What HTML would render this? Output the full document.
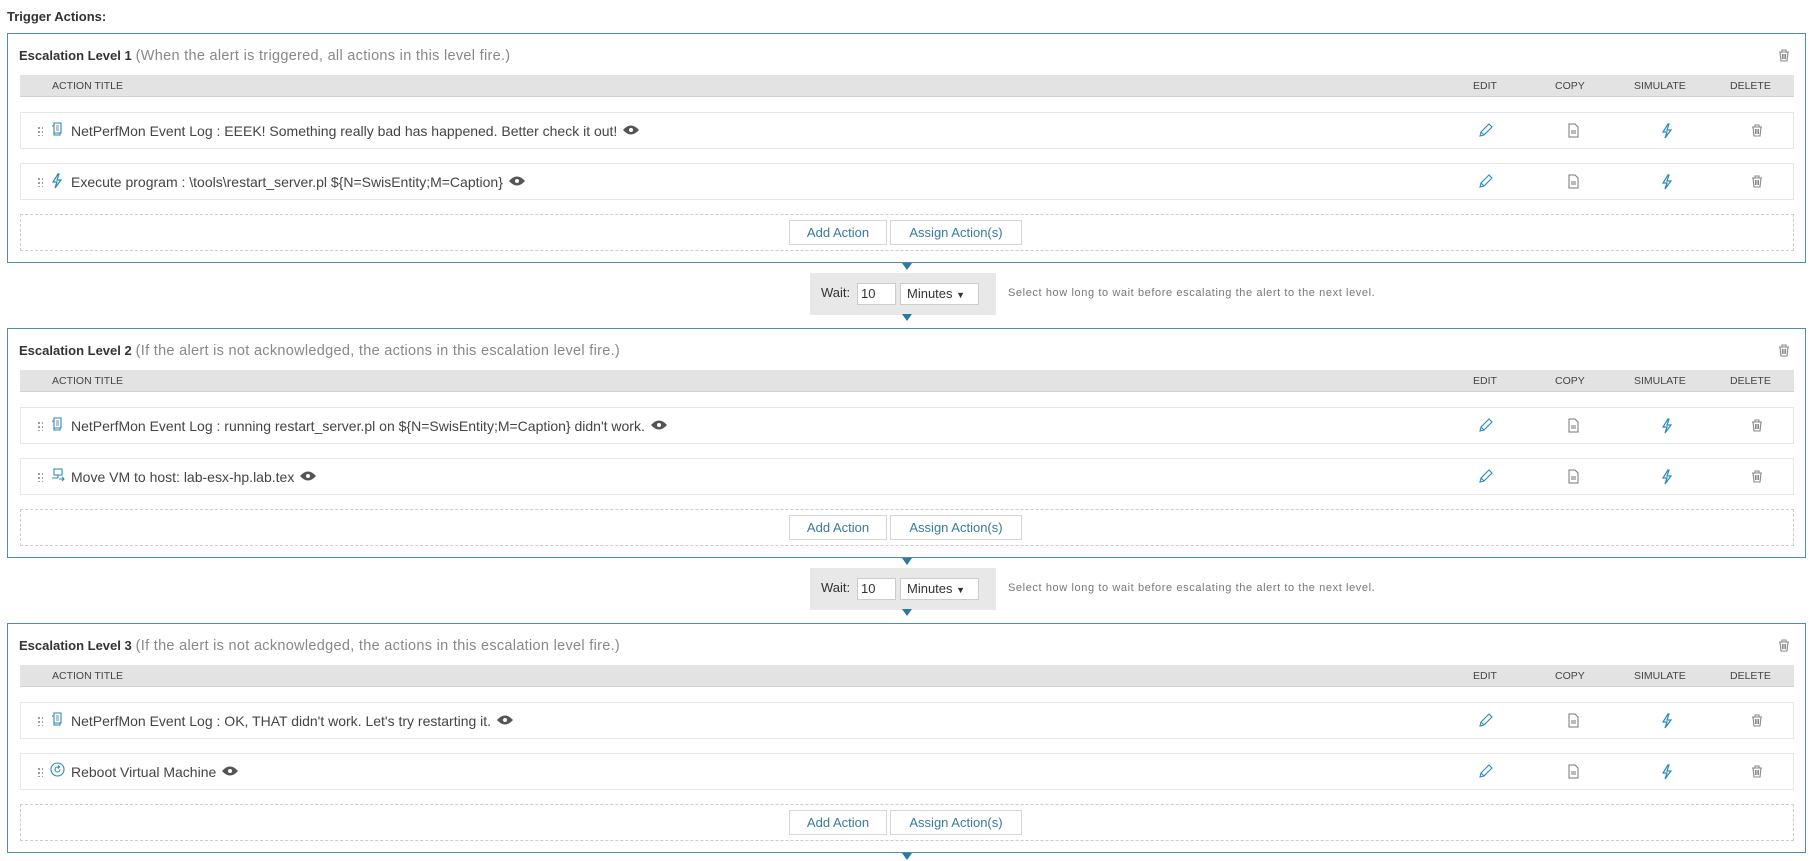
<!DOCTYPE html>
<html><head><meta charset="utf-8"><style>
*{box-sizing:border-box;margin:0;padding:0}
body{width:1811px;height:861px;overflow:hidden;background:#fff;font-family:"Liberation Sans",sans-serif;color:#333;position:relative}
.ta{position:absolute;left:7px;top:9px;font-size:13px;font-weight:bold;color:#333}
.lvl{position:absolute;left:7px;width:1799px;height:230px;border:1px solid #4a90b0;background:#fff}
.tt{position:absolute;left:11px;top:13px;font-size:14px;color:#333;white-space:nowrap}
.tt b{font-size:13px}
.tt span{font-weight:normal;color:#888;font-size:14.5px;letter-spacing:0.3px}
.hdr{position:absolute;left:12px;top:41px;width:1774px;height:22px;background:#e3e3e3;border-bottom:1px solid #d0d0d0;font-size:10.5px;color:#444}
.hdr div{position:absolute;top:5px}
.row{position:absolute;left:12px;width:1774px;height:37px;border:1px solid #e6e6e6;background:#fff;font-size:14px;color:#444}
.row .txt{position:absolute;left:50px;top:10px;white-space:nowrap}
.dots{position:absolute;left:16px;top:13px;width:6px;height:10px;background-image:radial-gradient(circle,#999 1px,transparent 1.3px);background-size:4px 4px}
.ic{position:absolute;top:9px}
.eye{display:inline-block;vertical-align:1px;margin-left:2px}
.dash{position:absolute;left:12px;top:180px;width:1774px;height:37px;border:1.5px dashed #ccc}
.btn{position:absolute;top:5px;height:25px;border:1px solid #d6d6d6;font-size:13px;color:#3a7a9a;line-height:23px;text-align:center;background:#fff}
.wait{position:absolute;left:810px;width:186px;height:42px;background:#e8e8e8;font-size:13px;color:#333}
.tri{position:absolute;width:0;height:0;border-left:5px solid transparent;border-right:5px solid transparent;border-top:7px solid #2a7aa0}
.help{position:absolute;left:1008px;font-size:11px;color:#777;letter-spacing:0.6px}
</style></head><body>
<div class="ta">Trigger Actions:</div>

<div class="lvl" style="top:33px">
 <div class="tt"><b>Escalation Level 1</b> <span>(When the alert is triggered, all actions in this level fire.)</span></div>
 <svg style="position:absolute;left:1769px;top:14px" width="14" height="14" viewBox="0 0 14 14"><path d="M2 4h10M5 4V2h4v2M3 4l1 9h6l1-9M5.5 6v5M7 6v5M8.5 6v5" fill="none" stroke="#888" stroke-width="1.1"/></svg>
 <div class="hdr"><div style="left:32px">ACTION TITLE</div><div style="left:1453px">EDIT</div><div style="left:1535px">COPY</div><div style="left:1614px">SIMULATE</div><div style="left:1710px">DELETE</div></div>
 <div class="row" style="top:78px"><div class="dots"></div><svg class="ic" style="left:30px" width="12" height="14" viewBox="0 0 12 14"><path d="M3 1h7v10H3zM1 4h2v9h6v-2" fill="none" stroke="#2a8ab8" stroke-width="1.1"/><path d="M5 4h3M5 6h3M5 8h3" stroke="#888"/></svg><div class="txt">NetPerfMon Event Log : EEEK! Something really bad has happened. Better check it out! <svg class="eye" width="16" height="10" viewBox="0 0 16 10"><path d="M0 5Q8-4 16 5Q8 14 0 5z" fill="#555"/><circle cx="8" cy="5" r="2" fill="#fff"/></svg></div>
  <svg style="position:absolute;left:1456px;top:10px" width="16" height="16" viewBox="0 0 16 16"><path d="M3 13l1-4 8-8 3 3-8 8zM4 9l3 3" fill="none" stroke="#2a8ab8" stroke-width="1.1"/></svg>
  <svg style="position:absolute;left:1547px;top:10px" width="12" height="16" viewBox="0 0 12 16"><path d="M1 1h6l3 3v10H1z" fill="none" stroke="#777"/><path d="M3 8h5M3 10h5" stroke="#777"/></svg>
  <svg style="position:absolute;left:1640px;top:10px" width="12" height="16" viewBox="0 0 12 16"><path d="M7 1L2 9h4l-2 6 6-8H6l2-6z" fill="none" stroke="#2a8ab8" stroke-width="1.2"/></svg>
  <svg style="position:absolute;left:1729px;top:10px" width="14" height="14" viewBox="0 0 14 14"><path d="M2 4h10M5 4V2h4v2M3 4l1 9h6l1-9M5.5 6v5M7 6v5M8.5 6v5" fill="none" stroke="#888" stroke-width="1.1"/></svg></div>
 <div class="row" style="top:129px"><div class="dots"></div><svg class="ic" style="left:30px" width="12" height="16" viewBox="0 0 12 16"><path d="M7 1L2 9h4l-2 6 6-8H6l2-6z" fill="none" stroke="#2a8ab8" stroke-width="1.2"/></svg><div class="txt">Execute program : \tools\restart_server.pl ${N=SwisEntity;M=Caption} <svg class="eye" width="16" height="10" viewBox="0 0 16 10"><path d="M0 5Q8-4 16 5Q8 14 0 5z" fill="#555"/><circle cx="8" cy="5" r="2" fill="#fff"/></svg></div>
  <svg style="position:absolute;left:1456px;top:10px" width="16" height="16" viewBox="0 0 16 16"><path d="M3 13l1-4 8-8 3 3-8 8zM4 9l3 3" fill="none" stroke="#2a8ab8" stroke-width="1.1"/></svg>
  <svg style="position:absolute;left:1547px;top:10px" width="12" height="16" viewBox="0 0 12 16"><path d="M1 1h6l3 3v10H1z" fill="none" stroke="#777"/><path d="M3 8h5M3 10h5" stroke="#777"/></svg>
  <svg style="position:absolute;left:1640px;top:10px" width="12" height="16" viewBox="0 0 12 16"><path d="M7 1L2 9h4l-2 6 6-8H6l2-6z" fill="none" stroke="#2a8ab8" stroke-width="1.2"/></svg>
  <svg style="position:absolute;left:1729px;top:10px" width="14" height="14" viewBox="0 0 14 14"><path d="M2 4h10M5 4V2h4v2M3 4l1 9h6l1-9M5.5 6v5M7 6v5M8.5 6v5" fill="none" stroke="#888" stroke-width="1.1"/></svg></div>
 <div class="dash"><div class="btn" style="left:768px;width:98px">Add Action</div><div class="btn" style="left:869px;width:132px">Assign Action(s)</div></div>
</div>
<div class="tri" style="left:902px;top:263px"></div>
<div class="wait" style="top:273px"><span style="position:absolute;left:11px;top:12px">Wait:</span><div style="position:absolute;left:47px;top:10px;width:39px;height:22px;background:#fff;border:1px solid #ccc;padding:2px 3px">10</div><div style="position:absolute;left:90px;top:10px;width:79px;height:22px;background:#fff;border:1px solid #ccc;padding:2px 6px">Minutes <span style="font-size:9px">▼</span></div></div>
<div class="help" style="top:287px">Select how long to wait before escalating the alert to the next level.</div>
<div class="tri" style="left:902px;top:314px"></div>

<div class="lvl" style="top:328px">
 <div class="tt"><b>Escalation Level 2</b> <span>(If the alert is not acknowledged, the actions in this escalation level fire.)</span></div>
 <svg style="position:absolute;left:1769px;top:14px" width="14" height="14" viewBox="0 0 14 14"><path d="M2 4h10M5 4V2h4v2M3 4l1 9h6l1-9M5.5 6v5M7 6v5M8.5 6v5" fill="none" stroke="#888" stroke-width="1.1"/></svg>
 <div class="hdr"><div style="left:32px">ACTION TITLE</div><div style="left:1453px">EDIT</div><div style="left:1535px">COPY</div><div style="left:1614px">SIMULATE</div><div style="left:1710px">DELETE</div></div>
 <div class="row" style="top:78px"><div class="dots"></div><svg class="ic" style="left:30px" width="12" height="14" viewBox="0 0 12 14"><path d="M3 1h7v10H3zM1 4h2v9h6v-2" fill="none" stroke="#2a8ab8" stroke-width="1.1"/><path d="M5 4h3M5 6h3M5 8h3" stroke="#888"/></svg><div class="txt">NetPerfMon Event Log : running restart_server.pl on ${N=SwisEntity;M=Caption} didn't work. <svg class="eye" width="16" height="10" viewBox="0 0 16 10"><path d="M0 5Q8-4 16 5Q8 14 0 5z" fill="#555"/><circle cx="8" cy="5" r="2" fill="#fff"/></svg></div>
  <svg style="position:absolute;left:1456px;top:10px" width="16" height="16" viewBox="0 0 16 16"><path d="M3 13l1-4 8-8 3 3-8 8zM4 9l3 3" fill="none" stroke="#2a8ab8" stroke-width="1.1"/></svg>
  <svg style="position:absolute;left:1547px;top:10px" width="12" height="16" viewBox="0 0 12 16"><path d="M1 1h6l3 3v10H1z" fill="none" stroke="#777"/><path d="M3 8h5M3 10h5" stroke="#777"/></svg>
  <svg style="position:absolute;left:1640px;top:10px" width="12" height="16" viewBox="0 0 12 16"><path d="M7 1L2 9h4l-2 6 6-8H6l2-6z" fill="none" stroke="#2a8ab8" stroke-width="1.2"/></svg>
  <svg style="position:absolute;left:1729px;top:10px" width="14" height="14" viewBox="0 0 14 14"><path d="M2 4h10M5 4V2h4v2M3 4l1 9h6l1-9M5.5 6v5M7 6v5M8.5 6v5" fill="none" stroke="#888" stroke-width="1.1"/></svg></div>
 <div class="row" style="top:129px"><div class="dots"></div><svg class="ic" style="left:29px" width="16" height="14" viewBox="0 0 16 14"><path d="M4 1h8v6H4zM8 7v3M2 10h6M9 11h5M12 9l2 2-2 2" fill="none" stroke="#2a8ab8" stroke-width="1.1"/></svg><div class="txt">Move VM to host: lab-esx-hp.lab.tex <svg class="eye" width="16" height="10" viewBox="0 0 16 10"><path d="M0 5Q8-4 16 5Q8 14 0 5z" fill="#555"/><circle cx="8" cy="5" r="2" fill="#fff"/></svg></div>
  <svg style="position:absolute;left:1456px;top:10px" width="16" height="16" viewBox="0 0 16 16"><path d="M3 13l1-4 8-8 3 3-8 8zM4 9l3 3" fill="none" stroke="#2a8ab8" stroke-width="1.1"/></svg>
  <svg style="position:absolute;left:1547px;top:10px" width="12" height="16" viewBox="0 0 12 16"><path d="M1 1h6l3 3v10H1z" fill="none" stroke="#777"/><path d="M3 8h5M3 10h5" stroke="#777"/></svg>
  <svg style="position:absolute;left:1640px;top:10px" width="12" height="16" viewBox="0 0 12 16"><path d="M7 1L2 9h4l-2 6 6-8H6l2-6z" fill="none" stroke="#2a8ab8" stroke-width="1.2"/></svg>
  <svg style="position:absolute;left:1729px;top:10px" width="14" height="14" viewBox="0 0 14 14"><path d="M2 4h10M5 4V2h4v2M3 4l1 9h6l1-9M5.5 6v5M7 6v5M8.5 6v5" fill="none" stroke="#888" stroke-width="1.1"/></svg></div>
 <div class="dash"><div class="btn" style="left:768px;width:98px">Add Action</div><div class="btn" style="left:869px;width:132px">Assign Action(s)</div></div>
</div>
<div class="tri" style="left:902px;top:558px"></div>
<div class="wait" style="top:568px"><span style="position:absolute;left:11px;top:12px">Wait:</span><div style="position:absolute;left:47px;top:10px;width:39px;height:22px;background:#fff;border:1px solid #ccc;padding:2px 3px">10</div><div style="position:absolute;left:90px;top:10px;width:79px;height:22px;background:#fff;border:1px solid #ccc;padding:2px 6px">Minutes <span style="font-size:9px">▼</span></div></div>
<div class="help" style="top:582px">Select how long to wait before escalating the alert to the next level.</div>
<div class="tri" style="left:902px;top:609px"></div>

<div class="lvl" style="top:623px">
 <div class="tt"><b>Escalation Level 3</b> <span>(If the alert is not acknowledged, the actions in this escalation level fire.)</span></div>
 <svg style="position:absolute;left:1769px;top:14px" width="14" height="14" viewBox="0 0 14 14"><path d="M2 4h10M5 4V2h4v2M3 4l1 9h6l1-9M5.5 6v5M7 6v5M8.5 6v5" fill="none" stroke="#888" stroke-width="1.1"/></svg>
 <div class="hdr"><div style="left:32px">ACTION TITLE</div><div style="left:1453px">EDIT</div><div style="left:1535px">COPY</div><div style="left:1614px">SIMULATE</div><div style="left:1710px">DELETE</div></div>
 <div class="row" style="top:78px"><div class="dots"></div><svg class="ic" style="left:30px" width="12" height="14" viewBox="0 0 12 14"><path d="M3 1h7v10H3zM1 4h2v9h6v-2" fill="none" stroke="#2a8ab8" stroke-width="1.1"/><path d="M5 4h3M5 6h3M5 8h3" stroke="#888"/></svg><div class="txt">NetPerfMon Event Log : OK, THAT didn't work. Let's try restarting it. <svg class="eye" width="16" height="10" viewBox="0 0 16 10"><path d="M0 5Q8-4 16 5Q8 14 0 5z" fill="#555"/><circle cx="8" cy="5" r="2" fill="#fff"/></svg></div>
  <svg style="position:absolute;left:1456px;top:10px" width="16" height="16" viewBox="0 0 16 16"><path d="M3 13l1-4 8-8 3 3-8 8zM4 9l3 3" fill="none" stroke="#2a8ab8" stroke-width="1.1"/></svg>
  <svg style="position:absolute;left:1547px;top:10px" width="12" height="16" viewBox="0 0 12 16"><path d="M1 1h6l3 3v10H1z" fill="none" stroke="#777"/><path d="M3 8h5M3 10h5" stroke="#777"/></svg>
  <svg style="position:absolute;left:1640px;top:10px" width="12" height="16" viewBox="0 0 12 16"><path d="M7 1L2 9h4l-2 6 6-8H6l2-6z" fill="none" stroke="#2a8ab8" stroke-width="1.2"/></svg>
  <svg style="position:absolute;left:1729px;top:10px" width="14" height="14" viewBox="0 0 14 14"><path d="M2 4h10M5 4V2h4v2M3 4l1 9h6l1-9M5.5 6v5M7 6v5M8.5 6v5" fill="none" stroke="#888" stroke-width="1.1"/></svg></div>
 <div class="row" style="top:129px"><div class="dots"></div><svg class="ic" style="left:29px;top:8px" width="15" height="15" viewBox="0 0 15 15"><circle cx="7.5" cy="7.5" r="6.5" fill="none" stroke="#2a8ab8" stroke-width="1.1"/><path d="M10 7.5A2.5 2.5 0 1 1 7.5 5H9M8 3.5L9.5 5 8 6.5" fill="none" stroke="#2a8ab8" stroke-width="1.1"/></svg><div class="txt">Reboot Virtual Machine <svg class="eye" width="16" height="10" viewBox="0 0 16 10"><path d="M0 5Q8-4 16 5Q8 14 0 5z" fill="#555"/><circle cx="8" cy="5" r="2" fill="#fff"/></svg></div>
  <svg style="position:absolute;left:1456px;top:10px" width="16" height="16" viewBox="0 0 16 16"><path d="M3 13l1-4 8-8 3 3-8 8zM4 9l3 3" fill="none" stroke="#2a8ab8" stroke-width="1.1"/></svg>
  <svg style="position:absolute;left:1547px;top:10px" width="12" height="16" viewBox="0 0 12 16"><path d="M1 1h6l3 3v10H1z" fill="none" stroke="#777"/><path d="M3 8h5M3 10h5" stroke="#777"/></svg>
  <svg style="position:absolute;left:1640px;top:10px" width="12" height="16" viewBox="0 0 12 16"><path d="M7 1L2 9h4l-2 6 6-8H6l2-6z" fill="none" stroke="#2a8ab8" stroke-width="1.2"/></svg>
  <svg style="position:absolute;left:1729px;top:10px" width="14" height="14" viewBox="0 0 14 14"><path d="M2 4h10M5 4V2h4v2M3 4l1 9h6l1-9M5.5 6v5M7 6v5M8.5 6v5" fill="none" stroke="#888" stroke-width="1.1"/></svg></div>
 <div class="dash"><div class="btn" style="left:768px;width:98px">Add Action</div><div class="btn" style="left:869px;width:132px">Assign Action(s)</div></div>
</div>
<div class="tri" style="left:902px;top:853px"></div>
</body></html>
